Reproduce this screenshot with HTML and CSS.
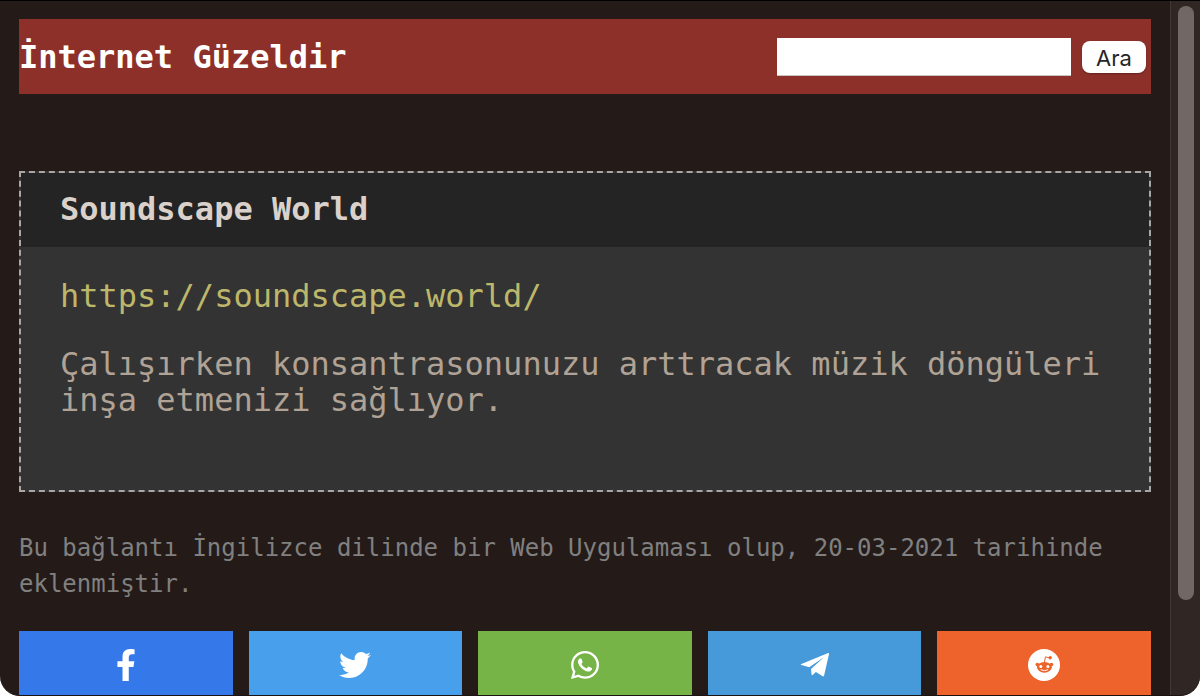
FILE: index.html
```html
<!DOCTYPE html>
<html lang="tr">
<head>
<meta charset="utf-8">
<meta name="viewport" content="width=device-width, initial-scale=1">
<title>Soundscape World - İnternet Güzeldir</title>
<link rel="stylesheet" href="styles.css">
</head>
<body>
<div class="window">
  <div class="page">
    <header class="site-header">
      <h1 class="site-title">İnternet Güzeldir</h1>
      <form class="search" role="search">
        <input class="search-input" type="search" aria-label="Ara">
        <button class="search-button" type="submit">Ara</button>
      </form>
    </header>
    <main>
      <article class="card">
        <h2 class="card-title">Soundscape World</h2>
        <div class="card-body">
          <a class="card-link" href="https://soundscape.world/">https://soundscape.world/</a>
          <p class="card-text">Çalışırken konsantrasonunuzu arttracak müzik döngüleri inşa etmenizi sağlıyor.</p>
        </div>
      </article>
      <p class="meta">Bu bağlantı İngilizce dilinde bir Web Uygulaması olup, 20-03-2021 tarihinde eklenmiştir.</p>
      <nav class="share" aria-label="Paylaş">
        <a class="share-link facebook" href="#facebook" aria-label="Facebook"><svg class="icon" viewBox="-96 0 512 512"><path d="M279.14 288l14.22-92.66h-88.91v-60.13c0-25.35 12.42-50.06 52.24-50.06h40.42V6.26S260.43 0 225.36 0c-73.22 0-121.08 44.38-121.08 124.72v70.62H22.89V288h81.39v224h100.17V288z"/></svg></a>
        <a class="share-link twitter" href="#twitter" aria-label="Twitter"><svg class="icon" viewBox="0 0 512 512"><path d="M459.37 151.716c.325 4.548.325 9.097.325 13.645 0 138.72-105.583 298.558-298.558 298.558-59.452 0-114.68-17.219-161.137-47.106 8.447.974 16.568 1.299 25.34 1.299 49.055 0 94.213-16.568 130.274-44.832-46.132-.975-84.792-31.188-98.112-72.772 6.498.974 12.995 1.624 19.818 1.624 9.421 0 18.843-1.3 27.614-3.573-48.081-9.747-84.143-51.98-84.143-102.985v-1.299c13.969 7.797 30.214 12.67 47.431 13.319-28.264-18.843-46.781-51.005-46.781-87.391 0-19.492 5.197-37.36 14.294-52.954 51.655 63.675 129.3 105.258 216.365 109.807-1.624-7.797-2.599-15.918-2.599-24.04 0-57.828 46.782-104.934 104.934-104.934 30.213 0 57.502 12.67 76.67 33.137 23.715-4.548 46.456-13.32 66.599-25.34-7.798 24.366-24.366 44.833-46.132 57.827 21.117-2.273 41.584-8.122 60.426-16.243-14.292 20.791-32.161 39.308-52.628 54.253z"/></svg></a>
        <a class="share-link whatsapp" href="#whatsapp" aria-label="WhatsApp"><svg class="icon" viewBox="-32 0 512 512"><path d="M380.9 97.1C339 55.1 283.2 32 223.9 32c-122.4 0-222 99.6-222 222 0 39.1 10.2 77.3 29.6 111L0 480l117.7-30.9c32.4 17.7 68.9 27 106.1 27h.1c122.3 0 224.1-99.6 224.1-222 0-59.3-25.2-115-67.1-157zm-157 341.6c-33.2 0-65.7-8.9-94-25.7l-6.7-4-69.8 18.3L72 359.2l-4.4-7c-18.5-29.4-28.2-63.3-28.2-98.2 0-101.7 82.8-184.5 184.6-184.5 49.3 0 95.6 19.2 130.4 54.1 34.8 34.9 56.2 81.2 56.1 130.5 0 101.8-84.9 184.6-186.6 184.6zm101.2-138.2c-5.5-2.8-32.8-16.2-37.9-18-5.1-1.9-8.8-2.8-12.5 2.8-3.7 5.6-14.3 18-17.6 21.8-3.2 3.7-6.5 4.2-12 1.4-32.6-16.3-54-29.1-75.5-66-5.7-9.8 5.7-9.1 16.3-30.3 1.8-3.7.9-6.9-.5-9.7-1.4-2.8-12.5-30.1-17.1-41.2-4.5-10.8-9.1-9.3-12.5-9.5-3.2-.2-6.9-.2-10.6-.2-3.7 0-9.7 1.4-14.8 6.9-5.1 5.6-19.4 19-19.4 46.3 0 27.3 19.9 53.7 22.6 57.4 2.8 3.7 39.1 59.7 94.8 83.8 35.2 15.2 49 16.5 66.6 13.9 10.7-1.6 32.8-13.4 37.4-26.4 4.6-13 4.6-24.1 3.2-26.4-1.3-2.5-5-3.9-10.5-6.6z"/></svg></a>
        <a class="share-link telegram" href="#telegram" aria-label="Telegram"><svg class="icon" viewBox="0 0 32 32"><path d="M29.2 4.1c.6-.2 1 .1.9.7l-5 21.8c-.2.8-.7 1-1.400.6L16.900 23l-3.300 2.900c-.6.5-1 .3-1-.4L12 20 24.900 8.200 10.200 18.300 2.400 16.100c-.8-.3-.8-.9 0-1.200z"/></svg></a>
        <a class="share-link reddit" href="#reddit" aria-label="Reddit"><svg class="icon" viewBox="0 0 32 32"><circle cx="16" cy="16" r="16"/><g class="snoo"><ellipse cx="16.4" cy="18.3" rx="7.4" ry="5.4"/><circle cx="9.3" cy="15.600" r="1.800"/><circle cx="23.500" cy="15.600" r="1.800"/><path class="antenna" d="M16.400 13.600l1-5.700 4 .9"/><circle cx="22.200" cy="8.700" r="1.700"/></g><circle cx="12.800" cy="17.500" r="1.500"/><circle cx="19.900" cy="17.500" r="1.500"/><path class="smile" d="M13 20.900q3.400 1.600 6.800 0"/></svg></a>
      </nav>
    </main>
  </div>
  <div class="scroll-track" aria-hidden="true"><div class="scroll-thumb"></div></div>
</div>
</body>
</html>
```

FILE: styles.css
```css
* {
  box-sizing: border-box;
}

body {
  margin: 0;
  background: #fff;
  font-family: "DejaVu Sans Mono", monospace;
}

h1, h2, p {
  margin: 0;
}

.window {
  display: flex;
  height: 100vh;
  overflow: hidden;
  background: #241a18;
  border-top: 1px solid #000;
  border-bottom: 1px solid #1b1212;
  border-radius: 0 0 20px 20px;
}

.page {
  flex: 1;
  min-width: 0;
  padding: 18px 19px 0;
}

.site-header {
  display: flex;
  align-items: center;
  justify-content: space-between;
  padding: 19px 5px 18px 0;
  background: #8e302a;
}

.site-title {
  font-size: 32px;
  line-height: 36px;
  color: #fff;
}

.search {
  display: flex;
  align-items: center;
  gap: 11px;
}

.search-input {
  width: 294px;
  height: 38px;
  padding: 0 8px;
  border: 0;
  border-bottom: 1px solid #c8c4c4;
  border-radius: 0;
  background: #fff;
  font-size: 22px;
  appearance: none;
}

.search-button {
  width: 64px;
  height: 32px;
  padding: 2px 0 0;
  border: 0;
  border-radius: 8px;
  background: #fff;
  box-shadow: 0 1px 2px rgba(0, 0, 0, 0.3);
  color: #262626;
  font: 22px/28px Inter, sans-serif;
}

.card {
  margin-top: 77px;
  border: 2px dashed #aaa6a5;
  background: #333;
}

.card-title {
  padding: 18px 39px 20px;
  background: #242424;
  font-size: 32px;
  line-height: 36px;
  color: #dbd1cb;
}

.card-body {
  padding: 31px 39px 72px;
  font-size: 32px;
  line-height: 36px;
}

.card-link {
  display: block;
  color: #bdb76b;
  text-decoration: none;
}

.card-text {
  margin-top: 32px;
  color: #b0a294;
}

.meta {
  margin-top: 38px;
  font-size: 24px;
  line-height: 36px;
  color: #808080;
}

.share {
  display: grid;
  grid-template-columns: repeat(5, 1fr);
  gap: 16px;
  margin-top: 29px;
}

.share-link {
  display: flex;
  align-items: center;
  justify-content: center;
  height: 64px;
  padding-top: 4px;
}

.icon {
  width: 32px;
  height: 32px;
  fill: #fff;
}

.facebook { background: #3578ea; }
.twitter { background: #489feb; }
.whatsapp { background: #77b447; }
.telegram { background: #469ad9; }
.reddit { background: #ee632c; }

.snoo {
  fill: #ee632c;
}

.antenna {
  fill: none;
  stroke: #ee632c;
  stroke-width: 1;
}

.smile {
  fill: none;
  stroke: #fff;
  stroke-width: 1;
  stroke-linecap: round;
}

.scroll-track {
  width: 30px;
  padding: 5px 6px 0 7px;
  background: #302725;
  border-left: 1px solid #413735;
}

.scroll-thumb {
  height: 594px;
  border-radius: 8px;
  background: #716866;
}
```
